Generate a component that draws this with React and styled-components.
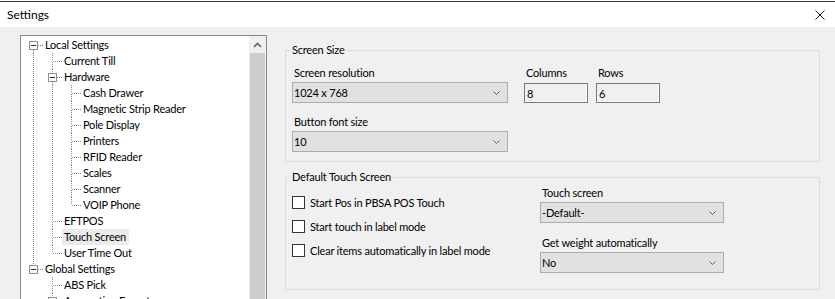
import React from 'react'
import styled, { createGlobalStyle } from 'styled-components'

const Global = createGlobalStyle`
  html, body {
    margin: 0;
    padding: 0;
    width: 835px;
    height: 299px;
    overflow: hidden;
    background: #ffffff;
  }
  body {
    font-family: 'Segoe UI', Lato, 'Liberation Sans', sans-serif;
    font-size: 11px;
    letter-spacing: -0.2px;
    color: #000;
  }
`

const Window = styled.div`
  margin-top: 1px;
  border-top: 1px solid #3c3c3c;
  height: 297px;
  display: flex;
  flex-direction: column;
  background: #f0f0f0;
  overflow: hidden;
`

const TitleBar = styled.div`
  height: 25px;
  flex: none;
  background: #fff;
  display: flex;
  align-items: center;
  justify-content: space-between;
  padding: 0 10px 0 7px;
`

const Title = styled.span`
  font-size: 12px;
  letter-spacing: 0;
  line-height: 14px;
`

const CloseBtn = styled.div`
  width: 10px;
  height: 10px;
  display: flex;
  margin-top: 1px;
`

const Body = styled.div`
  flex: 1;
  display: flex;
  align-items: flex-start;
  padding: 8px 0 0 20px;
  min-height: 0;
`

const TreeBox = styled.div`
  width: 245px;
  height: 300px;
  flex: none;
  border: 1px solid #828790;
  background: #fff;
  display: flex;
`

const TreeList = styled.div`
  flex: 1;
  padding: 1px 0 0 3px;
`

const Row = styled.div`
  height: 16px;
  display: flex;
  align-items: center;
`

const Cell = styled.svg`
  width: 19px;
  height: 16px;
  flex: none;
  display: block;
`

const Label = styled.span`
  line-height: 16px;
  padding: 0 3px 0 2px;
  white-space: nowrap;
  background: ${({ $selected }) => ($selected ? '#ebebeb' : 'transparent')};
`

const ScrollBar = styled.div`
  width: 17px;
  flex: none;
  background: #f0f0f0;
  display: flex;
  flex-direction: column;
`

const ScrollArrow = styled.div`
  height: 17px;
  display: flex;
  align-items: center;
  justify-content: center;
`

const Thumb = styled.div`
  flex: 1;
  margin: 0 1px;
  background: #cdcdcd;
`

const Right = styled.div`
  margin-left: 18px;
  width: 535px;
  display: flex;
  flex-direction: column;
  gap: 8px;
  margin-top: 8px;
`

const Group = styled.fieldset`
  margin: 0;
  min-width: 0;
  border: 1px solid #dcdcdc;
  padding: ${({ $pad }) => $pad};
`

const Legend = styled.legend`
  padding: 0 2px;
  margin-left: -2px;
  line-height: 14px;
`

const Row1 = styled.div`
  display: flex;
  align-items: flex-start;
`

const Field = styled.div`
  display: flex;
  flex-direction: column;
  gap: ${({ $gap }) => $gap || '2px'};
  margin-left: ${({ $ml }) => $ml || '0'};
`

const FieldLabel = styled.span`
  line-height: 14px;
  padding-left: ${({ $pl }) => $pl || '2px'};
  margin-top: ${({ $mt }) => $mt || '0'};
`

const Combo = styled.div`
  width: ${({ $w }) => $w}px;
  height: 21px;
  box-sizing: border-box;
  border: 1px solid #adadad;
  background: #e1e1e1;
  display: flex;
  align-items: center;
  justify-content: space-between;
  padding: 0 7px 0 1px;
`

const TextBox = styled.div`
  width: 64px;
  height: 20px;
  box-sizing: border-box;
  border: 1px solid #7a7a7a;
  background: #f0f0f0;
  box-shadow: inset -1px -1px 0 #fafafa;
  display: flex;
  align-items: center;
  padding-left: 2px;
`

const TouchGrid = styled.div`
  display: grid;
  grid-template-columns: 248px 184px;
`

const CheckList = styled.div`
  display: flex;
  flex-direction: column;
  gap: 7px;
  padding-top: 10px;
`

const CheckRow = styled.label`
  display: flex;
  align-items: center;
  gap: 5px;
  height: 17px;
`

const Box = styled.span`
  width: 13px;
  height: 13px;
  box-sizing: border-box;
  border: 1px solid #333;
  background: #fff;
  flex: none;
`

const RightCol = styled.div`
  display: flex;
  flex-direction: column;
  padding-top: 2px;
`

const Chevron = () => (
  <svg width="7" height="4" viewBox="0 0 7 4">
    <path d="M0.5 0.5 L3.5 3.5 L6.5 0.5" fill="none" stroke="#606060" strokeWidth="1" />
  </svg>
)

const tree = [
  { label: 'Local Settings', level: 0, exp: true, guides: [], last: false, first: true },
  { label: 'Current Till', level: 1, guides: [1] },
  { label: 'Hardware', level: 1, exp: true, guides: [1] },
  { label: 'Cash Drawer', level: 2, guides: [1, 1] },
  { label: 'Magnetic Strip Reader', level: 2, guides: [1, 1] },
  { label: 'Pole Display', level: 2, guides: [1, 1] },
  { label: 'Printers', level: 2, guides: [1, 1] },
  { label: 'RFID Reader', level: 2, guides: [1, 1] },
  { label: 'Scales', level: 2, guides: [1, 1] },
  { label: 'Scanner', level: 2, guides: [1, 1] },
  { label: 'VOIP Phone', level: 2, guides: [1, 1], last: true },
  { label: 'EFTPOS', level: 1, guides: [1] },
  { label: 'Touch Screen', level: 1, guides: [1], selected: true },
  { label: 'User Time Out', level: 1, guides: [1], last: true },
  { label: 'Global Settings', level: 0, exp: true, guides: [], last: true },
  { label: 'ABS Pick', level: 1, guides: [0] },
  { label: 'Accounting Export', level: 1, exp: true, guides: [0] },
]

const dot = { stroke: '#8a8a8a', strokeWidth: 1, strokeDasharray: '1 1' }

const Guide = ({ on }) => (
  <Cell viewBox="0 0 19 16">
    {on ? <line x1="9.5" y1="0" x2="9.5" y2="16" style={dot} /> : null}
  </Cell>
)

const Connector = ({ exp, last, first }) => (
  <Cell viewBox="0 0 19 16">
    {!first && <line x1="9.5" y1="0" x2="9.5" y2={exp ? 4 : 8} style={dot} />}
    {!last && <line x1="9.5" y1={exp ? 13 : 9} x2="9.5" y2="16" style={dot} />}
    <line x1={exp ? 14 : 10} y1="8.5" x2="19" y2="8.5" style={dot} />
    {exp && (
      <g>
        <rect x="5.5" y="4.5" width="8" height="8" fill="#fafafa" stroke="#919191" />
        <line x1="7" y1="8.5" x2="12" y2="8.5" stroke="#333" />
      </g>
    )}
  </Cell>
)

const TreeRow = ({ item }) => (
  <Row>
    {item.guides.map((g, i) => (
      <Guide key={i} on={g} />
    ))}
    <Connector exp={item.exp} last={item.last} first={item.first} />
    <Label $selected={item.selected}>{item.label}</Label>
  </Row>
)

export default function App() {
  return (
    <>
      <Global />
      <Window>
        <TitleBar>
          <Title>Settings</Title>
          <CloseBtn>
            <svg width="10" height="10" viewBox="0 0 10 10">
              <path d="M0.5 0.5 L9.5 9.5 M9.5 0.5 L0.5 9.5" stroke="#1a1a1a" strokeWidth="1" fill="none" />
            </svg>
          </CloseBtn>
        </TitleBar>
        <Body>
          <TreeBox>
            <TreeList>
              {tree.map((item) => (
                <TreeRow key={item.label} item={item} />
              ))}
            </TreeList>
            <ScrollBar>
              <ScrollArrow>
                <svg width="9" height="6" viewBox="0 0 9 6">
                  <path d="M1 5 L4.5 1.5 L8 5" fill="none" stroke="#606060" strokeWidth="1.6" />
                </svg>
              </ScrollArrow>
              <Thumb />
            </ScrollBar>
          </TreeBox>
          <Right>
            <Group $pad="9px 6px 9px 6px">
              <Legend>Screen Size</Legend>
              <Row1>
                <Field $gap="2px">
                  <FieldLabel>Screen resolution</FieldLabel>
                  <Combo $w={216}>
                    <span>1024 x 768</span>
                    <Chevron />
                  </Combo>
                  <FieldLabel $mt="10px">Button font size</FieldLabel>
                  <Combo $w={216}>
                    <span>10</span>
                    <Chevron />
                  </Combo>
                </Field>
                <Field $ml="16px" $gap="3px">
                  <FieldLabel $pl="2px">Columns</FieldLabel>
                  <TextBox>8</TextBox>
                </Field>
                <Field $ml="8px" $gap="3px">
                  <FieldLabel $pl="2px">Rows</FieldLabel>
                  <TextBox>6</TextBox>
                </Field>
              </Row1>
            </Group>
            <Group $pad="0 6px 16px 6px">
              <Legend>Default Touch Screen</Legend>
              <TouchGrid>
                <CheckList>
                  <CheckRow>
                    <Box />
                    Start Pos in PBSA POS Touch
                  </CheckRow>
                  <CheckRow>
                    <Box />
                    Start touch in label mode
                  </CheckRow>
                  <CheckRow>
                    <Box />
                    Clear items automatically in label mode
                  </CheckRow>
                </CheckList>
                <RightCol>
                  <Field $gap="2px">
                    <FieldLabel>Touch screen</FieldLabel>
                    <Combo $w={184}>
                      <span>-Default-</span>
                      <Chevron />
                    </Combo>
                    <FieldLabel $mt="11px">Get weight automatically</FieldLabel>
                    <Combo $w={184}>
                      <span>No</span>
                      <Chevron />
                    </Combo>
                  </Field>
                </RightCol>
              </TouchGrid>
            </Group>
          </Right>
        </Body>
      </Window>
    </>
  )
}
